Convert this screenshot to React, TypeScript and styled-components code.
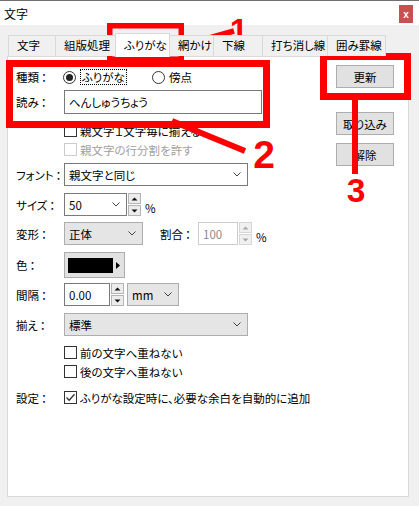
import React from 'react';
import styled, { createGlobalStyle } from 'styled-components';

const GlobalStyle = createGlobalStyle`
  html, body {
    margin: 0;
    padding: 0;
  }
  body {
    width: 419px;
    height: 506px;
    overflow: hidden;
    background: #f0f0f0;
    font-family: "Noto Sans CJK JP", "Noto Sans", sans-serif;
    font-size: 11.5px;
    font-feature-settings: "palt";
    color: #000;
  }
`;

const tabs = [
  { label: '文字', w: 48 },
  { label: '組版処理', w: 61 },
  { label: 'ふりがな', w: 55, active: true },
  { label: '網かけ', w: 45 },
  { label: '下線', w: 50 },
  { label: '打ち消し線', w: 66 },
  { label: '囲み罫線', w: 59 },
];

function Chevron() {
  return (
    <svg width="8" height="5" viewBox="0 0 8 5">
      <polyline points="0.5,0.5 4,4 7.5,0.5" fill="none" stroke="#444" strokeWidth="1" />
    </svg>
  );
}

function Arrow({ up, disabled }: { up?: boolean; disabled?: boolean }) {
  return (
    <svg width="7" height="4" viewBox="0 0 7 4">
      <polygon
        points={up ? '0.5,3.5 3.5,0.5 6.5,3.5' : '0.5,0.5 3.5,3.5 6.5,0.5'}
        fill={disabled ? '#a8a8a8' : '#111'}
      />
    </svg>
  );
}

function Spinner({ disabled }: { disabled?: boolean }) {
  return (
    <Spin>
      <SpinBtn $disabled={disabled}>
        <Arrow up disabled={disabled} />
      </SpinBtn>
      <SpinBtn $disabled={disabled}>
        <Arrow disabled={disabled} />
      </SpinBtn>
    </Spin>
  );
}

function Check({ label, checked, disabled }: { label: string; checked?: boolean; disabled?: boolean }) {
  return (
    <CheckWrap $disabled={disabled}>
      <Box $disabled={disabled}>
        {checked && (
          <svg width="11" height="11" viewBox="0 0 11 11">
            <polyline points="1.5,5.5 4.2,8.3 9.5,2.2" fill="none" stroke="#333" strokeWidth="1.3" />
          </svg>
        )}
      </Box>
      {label}
    </CheckWrap>
  );
}

function Label({ text, sub }: { text: string; sub?: boolean }) {
  const Wrap = sub ? SubLabelBox : LabelBox;
  return (
    <Wrap>
      {text}
      <Colon>：</Colon>
    </Wrap>
  );
}

export default function App(): JSX.Element {
  return (
    <Window>
      <GlobalStyle />
      <TitleBar>
        <span>文字</span>
        <Close>x</Close>
      </TitleBar>
      <Body>
        <TabStrip>
          {tabs.map((t) => (
            <Tab key={t.label} $w={t.w} $active={t.active}>
              {t.label}
            </Tab>
          ))}
        </TabStrip>
        <Panel>
          <Form>
            <Row>
              <Label text="種類" />
              <RadioItem $w={90}>
                <Radio $on />
                <Focus>ふりがな</Focus>
              </RadioItem>
              <RadioItem>
                <Radio />
                <span>傍点</span>
              </RadioItem>
            </Row>
            <Row $mt={1}>
              <Label text="読み" />
              <Field $w={198} $h={24}>へんしゅうちょう</Field>
            </Row>
            <Row $mt={7} $h={19} $indent>
              <Check label="親文字１文字毎に揃える" />
            </Row>
            <Row $h={19} $indent>
              <Check label="親文字の行分割を許す" disabled />
            </Row>
            <Row $mt={4} $h={23}>
              <Label text="フォント" />
              <Field $w={184}>
                親文字と同じ
                <Chevron />
              </Field>
            </Row>
            <Row $mt={7} $h={23}>
              <Label text="サイズ" />
              <Field $w={63}>
                50
                <Chevron />
              </Field>
              <Spinner />
              <Unit>%</Unit>
            </Row>
            <Row $mt={6} $h={23}>
              <Label text="変形" />
              <Drop $w={79}>
                正体
                <Chevron />
              </Drop>
              <Label text="割合" sub />
              <Field $w={40} $disabled>
                100
              </Field>
              <Spinner disabled />
              <Unit>%</Unit>
            </Row>
            <Row $mt={7} $h={26}>
              <Label text="色" />
              <ColorBtn>
                <Swatch />
                <svg width="4" height="7" viewBox="0 0 4 7">
                  <polygon points="0,0 4,3.5 0,7" fill="#000" />
                </svg>
              </ColorBtn>
            </Row>
            <Row $mt={5} $h={23}>
              <Label text="間隔" />
              <Field $w={46}>0.00</Field>
              <Spinner />
              <Drop $w={52} $ml={3}>
                mm
                <Chevron />
              </Drop>
            </Row>
            <Row $mt={7} $h={23}>
              <Label text="揃え" />
              <Drop $w={184}>
                標準
                <Chevron />
              </Drop>
            </Row>
            <Row $mt={7} $h={19} $indent>
              <Check label="前の文字へ重ねない" />
            </Row>
            <Row $h={19} $indent>
              <Check label="後の文字へ重ねない" />
            </Row>
            <Row $mt={7} $h={19}>
              <Label text="設定" />
              <Check label="ふりがな設定時に、必要な余白を自動的に追加" checked />
            </Row>
          </Form>
          <Buttons>
            <Button>更新</Button>
            <Button $mt={24}>取り込み</Button>
            <Button $mt={8}>解除</Button>
          </Buttons>
        </Panel>
      </Body>

      <Overlay width="419" height="506" viewBox="0 0 419 506">
        <g fill="none" stroke="#ff0000">
          <rect x="109.75" y="25.75" width="71.5" height="33.5" strokeWidth="5.5" />
          <rect x="9.5" y="63.5" width="257" height="61" strokeWidth="7" />
          <rect x="323.5" y="56.5" width="84" height="40" strokeWidth="7" />
          <line x1="181" y1="46" x2="234" y2="31" strokeWidth="5.5" />
          <line x1="172" y1="121" x2="245" y2="151" strokeWidth="6" />
          <line x1="355" y1="97" x2="355" y2="174" strokeWidth="6" />
        </g>
        <g fill="#ff0000" fontFamily="'Liberation Sans', Arial, sans-serif" fontWeight="bold" textAnchor="middle">
          <text x="239" y="42" fontSize="33">1</text>
          <text x="264" y="168" fontSize="39">2</text>
          <text x="356" y="202" fontSize="33.5">3</text>
        </g>
      </Overlay>
    </Window>
  );
}

const Window = styled.div`
  position: relative;
  width: 419px;
  height: 506px;
  display: flex;
  flex-direction: column;
  background: #f0f0f0;
`;

const TitleBar = styled.div`
  box-sizing: border-box;
  height: 25px;
  border-top: 1px solid #707070;
  background: #fff;
  display: flex;
  align-items: center;
  justify-content: space-between;
  padding: 0 6px 0 4px;
  font-size: 12px;
`;

const Close = styled.div`
  width: 14px;
  height: 18px;
  margin-top: 2px;
  background: #c75050;
  color: #fff;
  font-family: "Liberation Sans", Arial, sans-serif;
  font-weight: bold;
  font-size: 10px;
  display: flex;
  align-items: center;
  justify-content: center;
`;

const Body = styled.div`
  flex: 1;
  display: flex;
  flex-direction: column;
  padding: 8px 10px 9px 7px;
`;

const TabStrip = styled.div`
  position: relative;
  z-index: 1;
  height: 24px;
  margin-bottom: -1px;
  padding-left: 1px;
  display: flex;
  align-items: flex-end;
`;

const Tab = styled.div<{ $w: number; $active?: boolean }>`
  box-sizing: border-box;
  width: ${(p) => p.$w}px;
  height: ${(p) => (p.$active ? 24 : 21)}px;
  margin-bottom: ${(p) => (p.$active ? 0 : 1)}px;
  margin-right: -1px;
  position: relative;
  z-index: ${(p) => (p.$active ? 2 : 1)};
  border: 1px solid #d9d9d9;
  border-bottom: none;
  background: ${(p) => (p.$active ? '#fff' : '#f0f0f0')};
  padding: ${(p) => (p.$active ? '3px 0 0 8px' : '1px 0 0 8px')};
  line-height: 17px;
  white-space: nowrap;
`;

const Panel = styled.div`
  flex: 1;
  display: flex;
  background: #fff;
  border: 1px solid #d9d9d9;
  padding: 8px 14px 0 8px;
`;

const Form = styled.div`
  flex: 1;
  display: flex;
  flex-direction: column;
`;

const Row = styled.div<{ $mt?: number; $h?: number; $indent?: boolean }>`
  display: flex;
  align-items: center;
  height: ${(p) => p.$h ?? 24}px;
  margin-top: ${(p) => p.$mt ?? 0}px;
  padding-left: ${(p) => (p.$indent ? 48 : 0)}px;
  white-space: nowrap;
`;

const LabelBox = styled.span`
  width: 48px;
  flex: none;
`;

const SubLabelBox = styled.span`
  width: 38px;
  margin-left: 17px;
  flex: none;
`;

const Colon = styled.span`
  margin-left: 2px;
`;

const RadioItem = styled.div<{ $w?: number }>`
  display: flex;
  align-items: center;
  width: ${(p) => (p.$w ? `${p.$w}px` : 'auto')};
  margin-left: -1px;
`;

const Radio = styled.span<{ $on?: boolean }>`
  box-sizing: border-box;
  width: 13px;
  height: 13px;
  border-radius: 50%;
  border: 1px solid #333;
  background: #fff;
  margin-right: 4px;
  display: flex;
  align-items: center;
  justify-content: center;
  &::after {
    content: '';
    display: ${(p) => (p.$on ? 'block' : 'none')};
    width: 7px;
    height: 7px;
    border-radius: 50%;
    background: #222;
  }
`;

const Focus = styled.span`
  border: 1px dotted #000;
  padding: 0 1px;
  line-height: 14px;
`;

const Field = styled.div<{ $w: number; $h?: number; $disabled?: boolean }>`
  box-sizing: border-box;
  width: ${(p) => p.$w}px;
  height: ${(p) => p.$h ?? 23}px;
  border: 1px solid ${(p) => (p.$disabled ? '#cccccc' : '#7a7a7a')};
  background: #fff;
  color: ${(p) => (p.$disabled ? '#8a8a8a' : '#000')};
  padding: 0 6px 0 4px;
  display: flex;
  align-items: center;
  justify-content: space-between;
`;

const Drop = styled.div<{ $w: number; $ml?: number }>`
  box-sizing: border-box;
  width: ${(p) => p.$w}px;
  height: 23px;
  margin-left: ${(p) => p.$ml ?? 0}px;
  border: 1px solid #adadad;
  background: #e5e5e5;
  padding: 0 6px 0 4px;
  display: flex;
  align-items: center;
  justify-content: space-between;
`;

const Spin = styled.div`
  width: 13px;
  height: 23px;
  margin-left: 1px;
  display: flex;
  flex-direction: column;
  justify-content: space-between;
`;

const SpinBtn = styled.div<{ $disabled?: boolean }>`
  box-sizing: border-box;
  height: 11px;
  border: 1px solid ${(p) => (p.$disabled ? '#d6d6d6' : '#b4b4b4')};
  background: ${(p) => (p.$disabled ? '#f0f0f0' : '#ececec')};
  display: flex;
  align-items: center;
  justify-content: center;
`;

const Unit = styled.span`
  align-self: flex-end;
  margin-left: 4px;
  line-height: 15px;
`;

const ColorBtn = styled.div`
  box-sizing: border-box;
  width: 61px;
  height: 26px;
  border: 1px solid #adadad;
  background: #e1e1e1;
  padding: 0 0 0 3px;
  display: flex;
  align-items: center;
  gap: 3px;
`;

const Swatch = styled.div`
  width: 45px;
  height: 15px;
  background: #000;
`;

const CheckWrap = styled.label<{ $disabled?: boolean }>`
  display: flex;
  align-items: center;
  color: ${(p) => (p.$disabled ? '#a0a0a0' : '#000')};
`;

const Box = styled.span<{ $disabled?: boolean }>`
  box-sizing: border-box;
  width: 13px;
  height: 13px;
  border: 1px solid ${(p) => (p.$disabled ? '#cccccc' : '#333')};
  background: #fff;
  margin-right: 3px;
  display: flex;
  align-items: center;
  justify-content: center;
`;

const Buttons = styled.div`
  width: 58px;
  display: flex;
  flex-direction: column;
`;

const Button = styled.div<{ $mt?: number }>`
  box-sizing: border-box;
  height: 23px;
  margin-top: ${(p) => p.$mt ?? 0}px;
  border: 1px solid #adadad;
  background: #e1e1e1;
  display: flex;
  align-items: center;
  justify-content: center;
`;

const Overlay = styled.svg`
  position: absolute;
  top: 0;
  left: 0;
  pointer-events: none;
`;
